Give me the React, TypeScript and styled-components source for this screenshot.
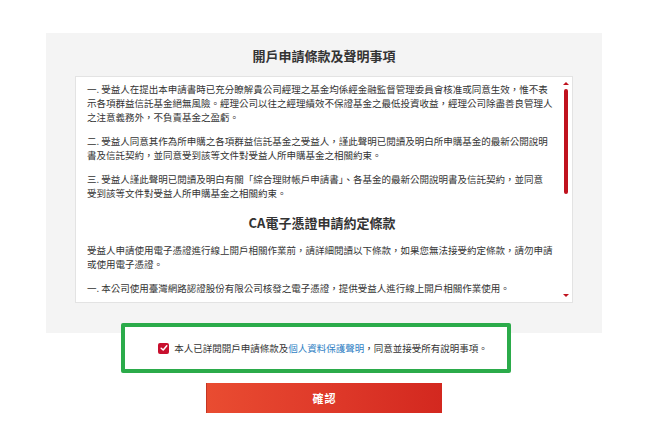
import styled, { createGlobalStyle } from "styled-components";

const GlobalStyle = createGlobalStyle`
  body {
    margin: 0;
    background: #ffffff;
    font-family: "Noto Sans CJK TC", "Noto Sans", sans-serif;
    color: #333333;
  }
`;

const Page = styled.div`
  width: 652px;
  padding-top: 33px;
`;

const Panel = styled.section`
  width: 556px;
  height: 300px;
  box-sizing: border-box;
  margin-left: 46px;
  padding: 13px 29px 30px;
  background: #f4f4f4;
`;

const Title = styled.h2`
  margin: 0 0 10px;
  font-size: 13px;
  line-height: 20px;
  font-weight: 700;
  text-align: center;
  color: #333333;
`;

const TermsBox = styled.div`
  position: relative;
  height: 227px;
  box-sizing: border-box;
  border: 1px solid #e3e3e3;
  background: #ffffff;
  overflow: hidden;
`;

const TermsText = styled.div`
  width: 470px;
  padding: 5px 0 0 11px;
  font-size: 9.5px;
  line-height: 14px;
  color: #333333;
`;

const Para = styled.p`
  margin: 0 0 10px;
`;

const SubTitle = styled.h3`
  margin: 13px 0 10px;
  font-size: 13px;
  line-height: 20px;
  font-weight: 700;
  text-align: center;
  color: #333333;
`;

const ScrollBar = styled.div`
  position: absolute;
  top: 4px;
  right: 3px;
  bottom: 2px;
  width: 6px;
`;

const Arrow = styled.div<{ $down?: boolean }>`
  position: absolute;
  left: 0;
  ${(p) => (p.$down ? "bottom: 3px;" : "top: 1px;")}
  width: 0;
  height: 0;
  border-left: 3px solid transparent;
  border-right: 3px solid transparent;
  ${(p) =>
    p.$down
      ? "border-top: 3px solid #c0121e;"
      : "border-bottom: 3px solid #c0121e;"}
`;

const Thumb = styled.div`
  position: absolute;
  top: 8px;
  left: 1px;
  width: 4px;
  height: 105px;
  border-radius: 2px;
  background: #c0121e;
`;

const Agreement = styled.div`
  width: 390px;
  height: 50px;
  box-sizing: border-box;
  margin: -10px 0 0 121px;
  padding-left: 14px;
  border: 4px solid #2bab4a;
  border-radius: 2px;
  background: #ffffff;
  display: flex;
  align-items: center;
  justify-content: center;
  position: relative;
`;

const CheckLabel = styled.label`
  display: flex;
  align-items: center;
  gap: 5px;
  font-size: 9.5px;
  color: #333333;
`;

const CheckBox = styled.span`
  width: 11px;
  height: 11px;
  border-radius: 2px;
  background: #c8102e;
  display: flex;
  align-items: center;
  justify-content: center;
`;

const LinkText = styled.a`
  color: #2f7fc4;
  text-decoration: none;
`;

const ConfirmButton = styled.button`
  display: block;
  width: 236px;
  height: 30px;
  margin: 10px 0 0 206px;
  border: none;
  border-left: 1px solid #c43523;
  background: linear-gradient(90deg, #e94c31 0%, #df3a2a 50%, #d3281f 100%);
  color: #ffffff;
  font-family: "Noto Sans CJK TC", sans-serif;
  font-size: 11px;
  font-weight: 700;
  letter-spacing: 1px;
  cursor: pointer;
`;

export default function App() {
  return (
    <Page>
      <GlobalStyle />
      <Panel>
        <Title>開戶申請條款及聲明事項</Title>
        <TermsBox>
          <TermsText>
            <Para>
              一. 受益人在提出本申請書時已充分瞭解貴公司經理之基金均係經金融監督管理委員會核准或同意生效，惟不表示各項群益信託基金絕無風險。經理公司以往之經理績效不保證基金之最低投資收益，經理公司除盡善良管理人之注意義務外，不負責基金之盈虧。
            </Para>
            <Para>
              二. 受益人同意其作為所申購之各項群益信託基金之受益人，謹此聲明已閱讀及明白所申購基金的最新公開說明書及信託契約，並同意受到該等文件對受益人所申購基金之相關約束。
            </Para>
            <Para>
              三. 受益人謹此聲明已閱讀及明白有關「綜合理財帳戶申請書」、各基金的最新公開說明書及信託契約，並同意
              <br />
              受到該等文件對受益人所申購基金之相關約束。
            </Para>
            <SubTitle>CA電子憑證申請約定條款</SubTitle>
            <Para>
              受益人申請使用電子憑證進行線上開戶相關作業前，請詳細閱讀以下條款，如果您無法接受約定條款，請勿申請或使用電子憑證。
            </Para>
            <Para>
              一. 本公司使用臺灣網路認證股份有限公司核發之電子憑證，提供受益人進行線上開戶相關作業使用。
            </Para>
          </TermsText>
          <ScrollBar>
            <Arrow />
            <Thumb />
            <Arrow $down />
          </ScrollBar>
        </TermsBox>
      </Panel>
      <Agreement>
        <CheckLabel>
          <CheckBox>
            <svg width="8" height="8" viewBox="0 0 8 8">
              <path
                d="M1.2 4.2 L3.2 6 L6.8 1.8"
                fill="none"
                stroke="#ffffff"
                strokeWidth="1.5"
                strokeLinecap="round"
                strokeLinejoin="round"
              />
            </svg>
          </CheckBox>
          <span>
            本人已詳閱開戶申請條款及<LinkText href="#">個人資料保護聲明</LinkText>，同意並接受所有說明事項。
          </span>
        </CheckLabel>
      </Agreement>
      <ConfirmButton>確認</ConfirmButton>
    </Page>
  );
}
